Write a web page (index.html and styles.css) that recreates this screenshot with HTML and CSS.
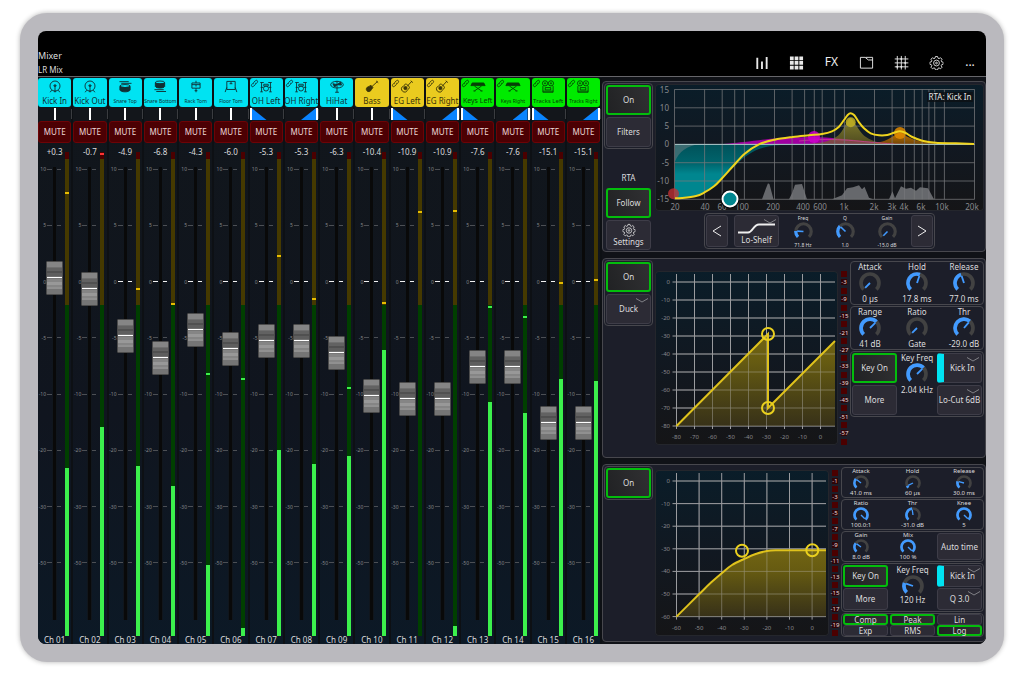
FILE: index.html
```html
<!DOCTYPE html>
<html lang="en">
<head>
<meta charset="utf-8">
<title>Mixer</title>
<meta name="viewport" content="width=device-width, initial-scale=1">
<link rel="stylesheet" href="styles.css">
</head>
<body>
<svg class="sprite" aria-hidden="true">
  <symbol id="i-kick" viewBox="0 0 16 14"><circle cx="8" cy="6.5" r="5.4"/><path d="M8 12V6.5M6.6 6.2h2.8M4.4 11l-1.6 2.2M11.6 11l1.6 2.2M6.8 12.6h2.4"/><circle cx="8" cy="6" r="1"/></symbol>
  <symbol id="i-snaretop" viewBox="0 0 16 14"><path d="M2 1.8h10M4 3.6h11" /><ellipse cx="8" cy="6.5" rx="5.5" ry="1.6"/><path class="solid" d="M2.5 6.8v4c1 2.6 10 2.6 11 0v-4c-2 1.8-9 1.8-11 0z"/></symbol>
  <symbol id="i-snarebot" viewBox="0 0 16 14"><ellipse cx="8" cy="2.6" rx="5" ry="1.5"/><path class="solid" d="M3 3v4c1 2.2 9 2.2 10 0V3c-2 1.6-8 1.6-10 0z"/><path d="M2 10.4h10M4 12.4h10.500"/></symbol>
  <symbol id="i-rack" viewBox="0 0 16 14"><path d="M3.600 3.200h8.800v5.600H3.600zM8 .8v2.400M8 8.800v4.400M6.500 11.500h3M3.600 5h8.800M8 5v2"/></symbol>
  <symbol id="i-floor" viewBox="0 0 16 14"><path d="M3.500 1.500h9v8.700h-9zM3.500 8l-1.800 5M12.500 8l1.800 5M8 2v2M6.500 4h3"/></symbol>
  <symbol id="i-kit" viewBox="0 0 18 14"><circle cx="9" cy="9.300" r="2.800"/><path d="M2.500 2.500h4M11.500 2.500h4M4 2.500v10.500M14 2.500v10.500M6.500 4.500h5v2h-5zM3 8h3M12 8h3M2.500 13h3M12.500 13h3"/></symbol>
  <symbol id="i-hat" viewBox="0 0 16 14"><ellipse cx="8" cy="5" rx="6.800" ry="3.600"/><path class="solid" d="M8 5l4-2.800.8 3.300zM8 5L3.500 4l2 3.600z"/><path d="M8 1v12.200M6 13.200h4"/></symbol>
  <symbol id="i-bass" viewBox="0 0 16 14"><path d="M7.500 7.500L14 1.500M12.500 1l2.200 2"/><path class="solid" d="M7 5.800c-1 .2-1.500 1-2.600 1.200C2 7.600 1.200 10 2.500 11.600s4 1 4.700-1.100c.3-1 1.400-1.200 1.800-2.200z"/></symbol>
  <symbol id="i-guitar" viewBox="0 0 16 14"><path d="M8 7l5-5.500M12 .8l2.300 2"/><path d="M7.500 4.600C6 4 5 5 5 6c-.3 1-2.800.8-3 3-.2 2.600 2 4.400 4.300 4 2-.4 1.700-2.400 2.700-2.900 1.200-.6 2.200-1.900 1.200-3.300z"/><circle class="solid" cx="6.300" cy="8.700" r="1.700"/></symbol>
  <symbol id="i-keys" viewBox="0 0 18 14"><path class="solid" d="M2.500 3h13l1.500 3H1z"/><path d="M5 6.500l8 5.500M13 6.500L5 12M3.800 12h2.400M11.800 12h2.400"/></symbol>
  <symbol id="i-tape" viewBox="0 0 16 14"><circle cx="4.800" cy="3.600" r="2.800"/><circle cx="11.200" cy="3.600" r="2.800"/><circle cx="4.800" cy="3.600" r=".7"/><circle cx="11.200" cy="3.600" r=".7"/><path d="M2.500 6.500v6.700h11V6.500M5 8.200h6v2.500H5zM2.500 12h11"/></symbol>
  <symbol id="i-link" viewBox="0 0 10 10"><path d="M4.200 5.800c-.7-.7-.6-1.500 0-2.100L6 1.900c1.500-1.300 3.300.4 2 2L6.700 5.300M5.800 4.200c.7.7.6 1.500 0 2.100L4 8.100c-1.500 1.300-3.300-.4-2-2l1.300-1.400"/></symbol>
  <symbol id="i-gear" viewBox="0 0 16 16"><path d="M6.800 1.200h2.400l.5 1.900 1.200.5 1.700-1 1.700 1.700-1 1.700.5 1.200 1.800.4v2.400l-1.800.5-.5 1.200 1 1.700-1.700 1.700-1.700-1-1.200.5-.5 1.800H6.800l-.5-1.800-1.200-.5-1.700 1-1.700-1.700 1-1.700-.5-1.200-1.800-.5V7.600l1.800-.4.5-1.200-1-1.700 1.700-1.700 1.700 1 1.200-.5z"/><circle cx="8" cy="8.600" r="3.300"/><circle cx="8" cy="8.600" r="1"/></symbol>
</svg>

<main class="device">
  <div class="screen">
    <header class="topbar">
      <div class="titles"><h1>Mixer</h1><p>LR Mix</p></div>
      <nav class="tools" aria-label="Views">
        <button type="button" aria-label="Meters"><svg viewBox="0 0 16 16"><path class="bars" d="M3.500 3v12M8.500 7v8M13.500 2v13"/></svg></button>
        <button type="button" aria-label="Channel grid"><svg viewBox="0 0 16 16"><path class="dots" d="M1 3.500h4M6 3.500h4M11 3.500h4M1 8.500h4M6 8.500h4M11 8.500h4M1 13.500h4M6 13.500h4M11 13.500h4"/></svg></button>
        <button type="button" class="fx">FX</button>
        <button type="button" aria-label="Scenes"><svg viewBox="0 0 16 16"><path d="M1.500 2.500h5l3.500 2.800h4.500v8.700h-13zM7 2.500h7.500v3"/></svg></button>
        <button type="button" aria-label="Routing"><svg viewBox="0 0 16 16"><path d="M3.500 1v14.500M7.800 1v14.500M12 1v14.500M.8 4.200h14.500M.8 8.400h14.500M.8 12.600h14.500"/><path class="nodes" d="M6.500 4.200l1.300-1.500 1.300 1.500-1.300 1.500zM10.700 8.400L12 6.900l1.300 1.500L12 9.900zM2.200 12.600l1.300-1.500 1.300 1.500-1.300 1.500zM6.500 12.600l1.300-1.500 1.300 1.500-1.300 1.500z"/></svg></button>
        <button type="button" aria-label="Settings"><svg viewBox="0 0 16 17"><use href="#i-gear"/></svg></button>
        <button type="button" class="dots-text">...</button>
      </nav>
    </header>

    <div class="workspace">
      <section class="channels" id="channels" aria-label="Channels"></section>

      <section class="processors">
        <article class="panel eq" aria-label="Equaliser">
          <div class="side">
            <div class="group stack"><button type="button" class="btn on">On</button><button type="button" class="btn">Filters</button></div>
            <div class="stack lower"><span class="caption">RTA</span><button type="button" class="btn on">Follow</button><button type="button" class="btn settings"><svg viewBox="0 0 16 17"><use href="#i-gear"/></svg>Settings</button></div>
          </div>
          <div class="eq-main">
            <svg class="graph" id="eq-graph" viewBox="656 84 329 127"></svg>
            <div class="group band">
              <button type="button" class="btn arrow" aria-label="Previous band"><svg viewBox="0 0 10 12"><path d="M9 1L1 6l8 5"/></svg></button>
              <div class="shape">
                <select class="btn" aria-label="Filter type"><option>Lo-Shelf</option></select>
                <svg viewBox="0 0 45 33"><path d="M4 17.500h10c5 0 5-8 11-8h16"/></svg>
              </div>
              <div class="knobs-eq">
                <div class="knob" data-label="Freq" data-value="71.8 Hz" data-turn="18"></div>
                <div class="knob" data-label="Q" data-value="1.0" data-turn="33"></div>
                <div class="knob" data-label="Gain" data-value="-15.0 dB" data-turn="0"></div>
              </div>
              <button type="button" class="btn arrow" aria-label="Next band"><svg viewBox="0 0 10 12"><path d="M1 1l8 5-8 5"/></svg></button>
            </div>
          </div>
        </article>

        <article class="panel gate" aria-label="Gate">
          <div class="side">
            <div class="group stack"><button type="button" class="btn on">On</button><select class="btn drop" aria-label="Gate mode"><option>Duck</option></select></div>
          </div>
          <svg class="graph" id="gate-graph" viewBox="656 271 183 174"></svg>
          <div class="reduction" data-marks="-3,-9,-15,-21,-27,-33,-39,-45,-51,-57"></div>
          <div class="controls">
            <div class="group trio">
              <div class="knob" data-label="Attack" data-value="0 µs" data-turn="0"></div>
              <div class="knob" data-label="Hold" data-value="17.8 ms" data-turn="57"></div>
              <div class="knob" data-label="Release" data-value="77.0 ms" data-turn="43"></div>
            </div>
            <div class="group trio">
              <div class="knob" data-label="Range" data-value="41 dB" data-turn="67"></div>
              <div class="knob" data-label="Ratio" data-value="Gate" data-turn="0"></div>
              <div class="knob" data-label="Thr" data-value="-29.0 dB" data-turn="65"></div>
            </div>
            <div class="group key">
              <button type="button" class="btn on">Key On</button>
              <div class="knob" data-label="Key Freq" data-value="2.04 kHz" data-turn="67"></div>
              <select class="btn drop source" aria-label="Key source"><option>Kick In</option></select>
              <button type="button" class="btn">More</button>
              <select class="btn drop" aria-label="Key filter"><option>Lo-Cut 6dB</option></select>
            </div>
          </div>
        </article>

        <article class="panel comp" aria-label="Compressor">
          <div class="side">
            <div class="group stack"><button type="button" class="btn on">On</button></div>
          </div>
          <svg class="graph" id="comp-graph" viewBox="656 470 174 166"></svg>
          <div class="reduction" data-marks="-1,-3,-5,-7,-9,-11,-13,-15,-17,-19"></div>
          <div class="controls">
            <div class="group trio">
              <div class="knob" data-label="Attack" data-value="41.0 ms" data-turn="31"></div>
              <div class="knob" data-label="Hold" data-value="60 µs" data-turn="7"></div>
              <div class="knob" data-label="Release" data-value="30.0 ms" data-turn="22"></div>
            </div>
            <div class="group trio">
              <div class="knob" data-label="Ratio" data-value="100.0:1" data-turn="100"></div>
              <div class="knob" data-label="Thr" data-value="-31.0 dB" data-turn="47"></div>
              <div class="knob" data-label="Knee" data-value="5" data-turn="100"></div>
            </div>
            <div class="group trio wide-end">
              <div class="knob" data-label="Gain" data-value="8.0 dB" data-turn="30"></div>
              <div class="knob" data-label="Mix" data-value="100 %" data-turn="100"></div>
              <button type="button" class="btn">Auto time</button>
            </div>
            <div class="group key">
              <button type="button" class="btn on">Key On</button>
              <div class="knob big" data-label="Key Freq" data-value="120 Hz" data-turn="24"></div>
              <select class="btn drop source" aria-label="Key source"><option>Kick In</option></select>
              <button type="button" class="btn">More</button>
              <select class="btn drop" aria-label="Key filter"><option>Q 3.0</option></select>
            </div>
            <div class="group modes">
              <button type="button" class="btn on">Comp</button><button type="button" class="btn on">Peak</button><button type="button" class="btn">Lin</button>
              <button type="button" class="btn">Exp</button><button type="button" class="btn">RMS</button><button type="button" class="btn on">Log</button>
            </div>
          </div>
        </article>
      </section>
    </div>
  </div>
</main>
<script src="app.js"></script>
</body>
</html>
```
FILE: styles.css
```css
* { box-sizing: border-box; }
body {
  margin: 0;
  min-height: 100vh;
  padding: 13px 21px 13px 20px;
  display: flex;
  background: #fff;
  color: #dcdcde;
  font: 8px/10px "Noto Sans", "Open Sans", sans-serif;
}
button, select, input { font: inherit; color: inherit; margin: 0; }
h1, p, ul { margin: 0; padding: 0; font: inherit; }
svg { display: block; }
.sprite { position: absolute; width: 0; height: 0; }

.device {
  flex: 1;
  display: flex;
  min-width: 0;
  border: 18px solid #bab9be;
  border-radius: 27px;
  background: #bab9be;
  box-shadow: 0 0 5px rgba(0, 0, 0, .3);
}
.screen {
  flex: 1;
  min-width: 0;
  display: flex;
  flex-direction: column;
  border-radius: 8px;
  overflow: hidden;
  background: #000;
}

/* top bar */
.topbar {
  display: flex;
  justify-content: space-between;
  align-items: flex-end;
  height: 46px;
  border-bottom: 1px solid #66666a;
}
.titles { display: flex; flex-direction: column; gap: 4px; padding-bottom: 1px; }
.titles h1 { font-size: 9px; }
.tools { display: flex; padding: 0 0 5px; }
.tools button {
  width: 35px;
  height: 18px;
  padding: 0;
  display: grid;
  place-items: center;
  border: 0;
  background: none;
  color: #eee;
}
.tools svg { width: 15px; height: 15px; fill: none; stroke: #e8e8e8; stroke-width: 1; }
.tools .bars { stroke-width: 2; }
.tools .dots { stroke-width: 4; }
.tools .nodes { fill: #e8e8e8; stroke: none; }
.tools .fx { font-size: 12px; line-height: 16px; }
.tools .dots-text { width: 32px; font-size: 12px; line-height: 18px; }

.workspace {
  flex: 1;
  min-height: 0;
  display: grid;
  grid-template-columns: minmax(0, 564fr) minmax(0, 384fr);
}

/* channel strips */
.channels {
  display: grid;
  grid-template-columns: repeat(16, minmax(0, 1fr));
  padding-top: 1px;
  background: linear-gradient(#11161b, #10151f 60%, #0c1926);
}
.strip {
  display: flex;
  flex-direction: column;
  min-width: 0;
  border-right: 2px solid #0d1014;
}
.tile {
  position: relative;
  height: 29px;
  padding: 2px 0 0;
  display: flex;
  flex-direction: column;
  align-items: center;
  justify-content: space-between;
  border: 0;
  border-radius: 3px;
  color: #103034;
  white-space: nowrap;
}
.tile.cyan { background: #00e3f2; }
.tile.gold { background: #eacb1f; color: #3a340a; }
.tile.green { background: #00eb00; color: #064006; }
.tile svg { width: 16px; height: 13px; fill: none; stroke: currentColor; stroke-width: 1; }
.solid { fill: currentColor; }
.tile .link { position: absolute; left: 0; top: 1px; width: 9px; height: 9px; stroke-width: 1; }
.tile span { line-height: 12px; }
.tile .s5 { font-size: 5px; }
.tile .s6 { font-size: 6px; }
.tile .s7 { font-size: 7px; }

.pan {
  height: 12px;
  margin: 1px 0;
  display: flex;
  justify-content: center;
  background: #13161b;
  box-shadow: 2px 0 0 -1px #3a3c40;
}
.pan i { width: 2px; background: #fff; }
.pan.left { justify-content: flex-start; }
.pan.right { justify-content: flex-end; }
.pan b { width: 15px; background: #0a84ff; }
.pan.left b { clip-path: polygon(0 0, 100% 100%, 0 100%); }
.pan.right b { clip-path: polygon(100% 0, 100% 100%, 0 100%); }

.mute {
  height: 22px;
  padding: 0;
  border: 1px solid #6d0306;
  border-radius: 3px;
  background: #4c0003;
  color: #ecd8d8;
}
.gain { height: 9px; line-height: 18px; text-align: center; color: #dcdcde; }
.lane {
  flex: 1;
  display: grid;
  grid-template-columns: 27px 4px;
  min-height: 200px;
}
.travel {
  position: relative;
  display: grid;
}
.scale {
  grid-area: 1 / 1;
  display: flex;
  flex-direction: column;
  justify-content: space-between;
  padding: 13px 0;
  list-style: none;
}
.scale li {
  display: grid;
  grid-template-columns: 8px 14px;
  gap: 1px;
  align-items: center;
  height: 8px;
  font-size: 5px;
  line-height: 8px;
  text-align: right;
  color: #85868a;
}
.scale li::after { content: ""; height: 1px; background: #4c4f54; }
.scale li.zero::after { background: #f2f2f2; }
.scale li:last-child::after { background: none; }
.slot {
  position: absolute;
  top: 15px;
  bottom: 16px;
  left: 14px;
  width: 5px;
  border: solid #10161d;
  border-width: 0 1px;
  background: #090909;
}
.fader {
  position: absolute;
  left: 8px;
  top: 0;
  width: 17px;
  height: 100%;
  appearance: none;
  -webkit-appearance: none;
  writing-mode: vertical-lr;
  direction: rtl;
  background: none;
}
.fader::-webkit-slider-runnable-track { width: 17px; background: none; }
.fader::-webkit-slider-thumb {
  -webkit-appearance: none;
  width: 17px;
  height: 34px;
  border: 1px solid #4b4b4b;
  border-radius: 1px;
  background: linear-gradient(#858585 0 5px, #707070 5px 6px, #626262 6px 9px, #505050 9px 11px, #5e5e5e 11px 14px, #707070 14px 15px, #fff 15px 16px, #777 16px 17px, #858585 17px 20px, #989898 20px 23px, #858585 23px 25px, #909090 25px 27px, #757575 27px);
}
.meter {
  position: relative;
  background: linear-gradient(#4b0000 0 7px, #453900 7px 31.600%, #003f00 31.600%);
}
.level { position: absolute; left: 0; right: 0; bottom: 0; background: #3cf04c; }
.peak { position: absolute; left: 0; right: 0; height: 2px; }
.peak.yellow { background: #e8bd00; }
.peak.red { background: #ff3434; }
.peak.lime { background: #3cf04c; }
.name { height: 8px; line-height: 7px; text-align: center; }

/* processors */
.processors {
  display: grid;
  grid-template-rows: 171fr 200fr 178fr;
  gap: 6px;
  padding: 4px 0 2px;
  background: #101217;
}
.panel {
  min-width: 0;
  min-height: 0;
  display: grid;
  gap: 0 2px;
  padding: 1px;
  border: 1px solid #47474d;
  border-radius: 4px;
  background: #1c1e29;
}
.eq { grid-template-columns: 49px minmax(0, 1fr); }
.gate { grid-template-columns: 49px minmax(0, 183fr) 8px minmax(0, 134fr); }
.comp { grid-template-columns: 49px minmax(0, 174fr) 8px minmax(0, 143fr); }
.group { border: 1px solid #47474d; border-radius: 4px; }
.side { display: flex; flex-direction: column; justify-content: space-between; }
.stack { display: grid; grid-auto-rows: 30px; gap: 2px; padding: 1px; }
.stack.lower { grid-template-rows: 17px; padding: 0 2px; }
.caption { align-self: center; text-align: center; }
.btn {
  min-width: 0;
  width: 100%;
  padding: 0;
  border: 1px solid #3e3d48;
  border-radius: 3px;
  background-color: #2c2b35;
  text-align: center;
  text-align-last: center;
  white-space: nowrap;
  appearance: none;
  -webkit-appearance: none;
}
.btn.on { border: 2px solid #03bd0c; background: linear-gradient(70deg, #212224, #303032); }
.drop {
  background-image: url("data:image/svg+xml,%3Csvg xmlns='http://www.w3.org/2000/svg' width='12' height='5'%3E%3Cpath d='M0 .5l6 3.500 6-3.500' fill='none' stroke='%23808086'/%3E%3C/svg%3E");
  background-repeat: no-repeat;
  background-position: right 2px top 3px;
}
.source { border-left: 7px solid #00e3f2; }
.settings svg { width: 14px; height: 14px; margin: 0 auto; fill: none; stroke: #ddd; }

.graph {
  align-self: center;
  width: 100%;
  border-radius: 4px;
  background: linear-gradient(#0a1d29, #111821 50%, #151517);
  box-shadow: inset 0 0 0 1px #24262c;
}
.graph text { fill: #88898d; font-size: 6px; }
.graph .big-axis text { font-size: 8px; }
.grid-lines { fill: none; stroke: #77787b; stroke-width: 1; }
.dyn .grid-lines { stroke: #9a9b9e; stroke-width: 1; }
.curve { fill: none; stroke: #f0d41e; stroke-width: 2; }
.dyn-curve { fill: none; stroke: #dfc21c; stroke-width: 2; }
.handle { fill: none; stroke: #ead01e; stroke-width: 2; }

.eq-main { display: flex; flex-direction: column; gap: 2px; align-items: center; padding-top: 1px; }
.band { display: flex; height: 36px; padding: 1px; }
.band .arrow { width: 22px; display: grid; place-items: center; }
.arrow svg { width: 10px; height: 12px; fill: none; stroke: #eee; stroke-width: 1; }
.shape { position: relative; display: flex; width: 45px; margin: 0 3px 0 6px; }
.shape select {
  padding-top: 17px;
  background-image: url("data:image/svg+xml,%3Csvg xmlns='http://www.w3.org/2000/svg' width='12' height='5'%3E%3Cpath d='M0 .5l6 3.500 6-3.500' fill='none' stroke='%23808086'/%3E%3C/svg%3E");
  background-repeat: no-repeat;
  background-position: right 2px top 3px;
}
.shape svg { position: absolute; inset: 0; pointer-events: none; fill: none; stroke: #eee; stroke-width: 2; }
.knobs-eq { display: grid; grid-template-columns: repeat(3, 42px); margin-right: 3px; }

.knob { display: flex; flex-direction: column; align-items: center; white-space: nowrap; }
.dial { position: relative; }
.dial svg { width: 22px; height: 22px; fill: none; }
.dial input { position: absolute; inset: 0; width: 100%; height: 100%; opacity: 0; }
.ring { stroke: #424242; stroke-width: 4; }
.fill { stroke: #419aff; stroke-width: 4; }
.hand { stroke: #419aff; stroke-width: 2; }
.knobs-eq .knob { font-size: 5px; line-height: 6px; }
.knobs-eq .dial { margin: 1px 0; }
.knobs-eq .dial svg { width: 19px; height: 19px; }

.reduction {
  align-self: center;
  height: 174px;
  display: flex;
  flex-direction: column;
  justify-content: space-between;
  align-items: center;
  font-size: 6px;
  color: #e8dada;
}
.comp .reduction { height: 167px; }
.reduction i { width: 6px; height: 6px; background: #4b0000; }
.reduction span { width: 6px; height: 6px; line-height: 6px; background: #300406; display: flex; justify-content: center; }
.controls { display: flex; flex-direction: column; gap: 1px; padding-top: 1px; }
.trio { display: grid; grid-template-columns: 36px minmax(0, 1fr) 36px; padding: 0 1px; }
.key { display: grid; grid-template-columns: 45px minmax(0, 1fr) 45px; grid-template-rows: 30px 30px; gap: 2px 0; padding: 1px; }
.key .knob { grid-area: 1 / 2 / 3 / 3; }
.key .source, .key .source ~ select { grid-column: 3; }
.key .source { grid-row: 1; }
.key .source ~ button { grid-area: 2 / 1; }
.key .source ~ select { grid-row: 2; }

.comp .trio .knob { font-size: 6px; line-height: 7px; }
.comp .trio .dial svg { width: 16px; height: 16px; margin-bottom: -1px; }
.comp .wide-end { grid-template-columns: 36px minmax(0, 1fr) 45px; }
.comp .wide-end .btn { margin: 1px 0; }
.comp .key { grid-template-rows: 22px 22px; gap: 1px 0; }
.comp .key .dial svg { margin-bottom: -2px; }
.comp .drop { background-position: right 1px top 2px; }
.modes { display: grid; grid-template-columns: repeat(3, 45px); grid-auto-rows: 11px; justify-content: space-between; padding: 0 1px; }
.modes .btn { line-height: 7px; }
```
FILE: app.js
```js
const SCALE = ["10", "5", "0", "-5", "-10", "-20", "-30", "-50", ""];

// name, label size class, icon, colour, pan, gain, fader %, level %, peak %, peak colour
const CHANNELS = [
  ["Kick In", "", "kick", "cyan", "", "+0.3", 75.8, 34.8, 8.2, "yellow"],
  ["Kick Out", "", "kick", "cyan", "", "-0.7", 73.3, 43.1, 0.2, "red"],
  ["Snare Top", "s5", "snaretop", "cyan", "", "-4.9", 62.8, 35.1, 28, "yellow"],
  ["Snare Bottom", "s5", "snarebot", "cyan", "", "-6.8", 57.9, 30.9, 31.3, "yellow"],
  ["Rack Tom", "s5", "rack", "cyan", "", "-4.3", 64.2, 14.6, 45.6, "lime"],
  ["Floor Tom", "s5", "floor", "cyan", "", "-6.0", 59.9, 1.7, 46.6, "lime"],
  ["OH Left", "", "kit", "cyan", "left", "-5.3", 61.7, 38.4, 21.3, "yellow"],
  ["OH Right", "", "kit", "cyan", "right", "-5.3", 61.7, 35.5, 30.2, "yellow"],
  ["HiHat", "", "hat", "cyan", "", "-6.3", 59.2, 37.2, 48.6, "lime"],
  ["Bass", "", "bass", "gold", "", "-10.4", 49.5, 59, 30.9, "yellow"],
  ["EG Left", "", "guitar", "gold", "left", "-10.9", 48.8, 0, 12.2, "yellow"],
  ["EG Right", "", "guitar", "gold", "right", "-10.9", 48.8, 2.1, 12, "yellow"],
  ["Keys Left", "s7", "keys", "green", "left", "-7.6", 55.9, 48.3, 31.9, "lime"],
  ["Keys Right", "s5", "keys", "green", "right", "-7.6", 55.9, 46.1, 33.9, "lime"],
  ["Tracks Left", "s6", "tape", "green", "left", "-15.1", 43.5, 53, 26.8, "yellow"],
  ["Tracks Right", "s5", "tape", "green", "right", "-15.1", 43.5, 52.7, 26.3, "yellow"]
];

const PAN = { "": "<i></i>", left: "<i></i><b></b>", right: "<b></b><i></i>" };

document.getElementById("channels").innerHTML = CHANNELS.map((c, i) => {
  const [name, size, icon, colour, pan, gain, fader, level, peak, peakColour] = c;
  const number = "Ch " + String(i + 1).padStart(2, "0");
  return `<div class="strip">
    <button type="button" class="tile ${colour}">${pan ? '<svg class="link"><use href="#i-link"/></svg>' : ""}<svg><use href="#i-${icon}"/></svg><span class="${size}">${name}</span></button>
    <div class="pan ${pan}">${PAN[pan]}</div>
    <button type="button" class="mute">MUTE</button>
    <div class="gain">${gain}</div>
    <div class="lane">
      <div class="travel">
        <ul class="scale">${SCALE.map(s => `<li class="${s === "0" ? "zero" : ""}"><span>${s}</span></li>`).join("")}</ul>
        <div class="slot"></div>
        <input class="fader" type="range" min="0" max="100" step="0.1" value="${fader}" aria-label="${name} fader">
      </div>
      <div class="meter"><div class="level" style="height:${level}%"></div><div class="peak ${peakColour}" style="top:${peak}%"></div></div>
    </div>
    <div class="name">${number}</div>
  </div>`;
}).join("");

// rotary knobs: 270 degree sweep starting at lower left
function polar(radius, turn) {
  const a = (turn * 2.7 - 135) * Math.PI / 180;
  return [12 + radius * Math.sin(a), 12 - radius * Math.cos(a)].map(v => v.toFixed(2)).join(" ");
}
function arc(to) {
  return `M${polar(9.8, 0)}A9.800 9.800 0 ${to > 66.6 ? 1 : 0} 1 ${polar(9.8, to)}`;
}
document.querySelectorAll(".knob").forEach(k => {
  const { label, value, turn } = k.dataset;
  k.innerHTML = `<span>${label}</span><div class="dial"><svg viewBox="0 0 24 24"><path class="ring" d="${arc(100)}"/>${turn > 0 ? `<path class="fill" d="${arc(+turn)}"/>` : ""}<path class="hand" d="M12 12L${polar(turn > 0 ? 8 : 7.5, +turn)}"/></svg><input type="range" value="${turn}" aria-label="${label}"></div><span>${value}</span>`;
});

document.querySelectorAll(".reduction").forEach(r => {
  r.innerHTML = "<i></i>" + r.dataset.marks.split(",").map(m => `<span>${m}</span><i></i>`).join("");
});

// smooth path through points
function smooth(p) {
  let d = `M${p[0][0]} ${p[0][1]}`;
  for (let i = 0; i < p.length - 1; i++) {
    const a = p[i - 1] || p[i], b = p[i], c = p[i + 1], e = p[i + 2] || c;
    d += `C${b[0] + (c[0] - a[0]) / 6} ${b[1] + (c[1] - a[1]) / 6} ${c[0] - (e[0] - b[0]) / 6} ${c[1] - (e[1] - b[1]) / 6} ${c[0]} ${c[1]}`;
  }
  return d;
}
const text = (x, y, s, anchor = "middle") => `<text x="${x}" y="${y}" text-anchor="${anchor}">${s}</text>`;

// equaliser
const freqX = f => 675.5 + 100 * Math.log10(f / 20);
const gainY = g => 144.4 - g * 3.66;
const freqs = [20, 40, 60, 80, 100, 200, 300, 400, 500, 600, 800, 1000, 2000, 3000, 4000, 5000, 6000, 7000, 8000, 10000, 20000];
const gains = [15, 10, 5, 0, -5, -10, -15];
const freqLabels = [[676, "20"], [706, "40"], [723, "60"], [743, "100"], [774, "200"], [804, "400"], [821, "600"], [845, "1k"], [875, "2k"], [893, "3k"], [905, "4k"], [922, "6k"], [943, "10k"], [973, "20k"]];
const total = smooth([[676, 198.3], [683, 198], [697, 196], [705, 192.7], [715, 186.3], [723, 178.3], [733, 167.3], [745.7, 153.7], [760, 144.3], [775.7, 139.7], [793.7, 137], [810, 135.3], [823, 134], [833, 131.3], [840, 126.7], [845, 120], [848.7, 115], [851.7, 113.3], [855.3, 115.3], [860, 122.3], [865, 128.3], [871.7, 133.3], [880, 135.3], [888.3, 135], [895, 132.7], [901, 131.3], [906.7, 133], [913.3, 137], [923.3, 140.7], [936.7, 142.7], [956.7, 143.3], [975, 144]]);
const shelf = smooth([[676, 198.3], [683, 198], [697, 196], [705, 192.7], [715, 186.3], [723, 178.3], [733, 168.5], [745.7, 157], [760, 149], [775, 145.5], [790, 144.4]]);
const wide = smooth([[720, 144.4], [745, 142], [775, 138.5], [795, 137.5], [815, 137], [840, 138.5], [873, 141.7], [907, 143.5], [930, 144.4]]);
const bell = smooth([[808, 144.4], [825, 142], [837, 137], [843, 131], [848, 122], [851.7, 118], [855, 122], [861, 131], [867, 137], [878, 142], [893, 144.4]]);
const high = smooth([[870, 144.4], [885, 141], [893, 137], [901, 132.7], [909, 137], [920, 141], [945, 144.4]]);
document.getElementById("eq-graph").innerHTML = `
  <defs>
    <linearGradient id="teal" x1="0" y1="0" x2="0" y2="1"><stop offset="0" stop-color="#00525a"/><stop offset=".35" stop-color="#00646c"/><stop offset=".55" stop-color="#00868f"/><stop offset="1" stop-color="#00868f"/></linearGradient>
    <linearGradient id="olive" x1="0" y1="0" x2="0" y2="1"><stop offset="0" stop-color="#97902d"/><stop offset="1" stop-color="#6d6420" stop-opacity=".8"/></linearGradient>
    <linearGradient id="amber" x1="0" y1="0" x2="0" y2="1"><stop offset="0" stop-color="#c87800"/><stop offset="1" stop-color="#8a5200" stop-opacity=".8"/></linearGradient>
  </defs>
  <path fill="#66686c" d="M763 199.300l4-11 2-5 1.500 1 4 15zM790 199.300l3-6 3-8.500 7-.7 5 15.200zM833 199.300l10-4 5-7 6-1 6-2 3 4 2.500-2.500 4.500 11 4 1.500zM890 199.300l3.500-8 2.500 7 6-12 5 2.500 5-1 5 3 4-3.500 8 1 6 11z"/>
  <path fill="url(#teal)" d="${shelf}L676 144.400z"/>
  <path fill="#4d7378" opacity=".75" d="M676 144.400h24c-12 1-20 7-24 17z"/>
  <path fill="#a000a0" d="${wide}z"/>
  <path fill="url(#olive)" opacity=".85" d="${bell}z"/>
  <path fill="url(#amber)" d="${high}z"/>
  <path fill="none" stroke="#d0409a" opacity=".7" d="M800 141c40-4 60 1 95 3"/>
  <path class="grid-lines" opacity=".75" d="${freqs.map(f => `M${freqX(f).toFixed(1)} 89.400V199.300`).join("")}${gains.map(g => `M675.500 ${gainY(g).toFixed(1)}H975.500`).join("")}"/>
  <path fill="none" stroke="#a8c8ca" d="M676 144.400H975.500"/>
  <circle cx="674.500" cy="193.700" r="5.500" fill="#c83236" opacity=".75"/>
  <circle cx="815" cy="137" r="6" fill="#cc00cc" opacity=".85"/>
  <circle cx="851.700" cy="122.300" r="5" fill="#c2b022" opacity=".85"/>
  <circle cx="901" cy="133" r="6" fill="#e08a00" opacity=".85"/>
  <path class="curve" d="${total}"/>
  <g class="big-axis">
    ${gains.map(g => text(670, gainY(g) + 3, g, "end")).join("")}
    ${freqLabels.map(([x, s]) => text(x, 209.5, s)).join("")}
    <rect x="928" y="92" width="46" height="10" fill="#0c1014" opacity=".8"/>
    <text x="951" y="100" text-anchor="middle" style="fill:#e4e4e4">RTA: Kick In</text>
  </g>
  <circle cx="731" cy="199" r="9.500" fill="#05080a"/>
  <circle cx="731" cy="199" r="7.500" fill="#00868f" stroke="#fff" stroke-width="2"/>`;

// dynamics graphs
function dynamics(id, g) {
  const xs = g.x.map((_, i) => g.x0 + i * g.step), ys = g.y.map((_, i) => g.y0 + i * g.step);
  const bottom = ys[ys.length - 1];
  document.getElementById(id).innerHTML = `
    <defs><linearGradient id="${id}-fill" x1="0" y1="0" x2="0" y2="1"><stop offset="0" stop-color="#837210" stop-opacity=".85"/><stop offset=".3" stop-color="#75670f" stop-opacity=".85"/><stop offset="1" stop-color="#403818" stop-opacity=".8"/></linearGradient></defs>
    <g class="dyn">
      <path class="grid-lines" d="${xs.map(x => `M${x} ${g.y0 - 8}V${bottom + 3}`).join("")}${ys.map(y => `M${g.x0 - 4} ${y}H${g.right}`).join("")}"/>
      <path fill="url(#${id}-fill)" d="${g.path}V${bottom}H${g.x0}z"/>
      <path class="grid-lines" opacity=".35" d="${xs.map(x => `M${x} ${g.y0}V${bottom}`).join("")}${ys.map(y => `M${g.x0} ${y}H${g.right}`).join("")}"/>
      <path class="${g.cls}" d="${g.path}"/>
      ${g.handles.map(h => `<circle class="handle" cx="${h[0]}" cy="${h[1]}" r="6"/>`).join("")}
      ${g.y.map((s, i) => text(671, ys[i] + 2, s, "end")).join("")}
      ${g.x.map((s, i) => text(xs[i], bottom + 13, s)).join("")}
    </g>`;
}
dynamics("gate-graph", {
  x0: 677.5, y0: 282, step: 18, right: 836, cls: "dyn-curve",
  x: ["-80", "-70", "-60", "-50", "-40", "-30", "-20", "-10", "0"],
  y: ["0", "-10", "-20", "-30", "-40", "-50", "-60", "-70", "-80"],
  path: "M677.500 426L769 334V408L836 341", handles: [[769, 334], [769, 408]]
});
dynamics("comp-graph", {
  x0: 677.5, y0: 481, step: 22.6, right: 827, cls: "dyn-curve",
  x: ["-60", "-50", "-40", "-30", "-20", "-10", "0"],
  y: ["0", "-10", "-20", "-30", "-40", "-50", "-60"],
  path: smooth([[677.5, 616.6], [700, 594.3], [712, 582.6], [723.3, 572.7], [733, 565], [745, 559], [756.7, 554], [768, 551], [778, 550.3], [800, 550.3], [827, 550.3]]), handles: [[743, 550.7], [813.3, 550.3]]
});
```
